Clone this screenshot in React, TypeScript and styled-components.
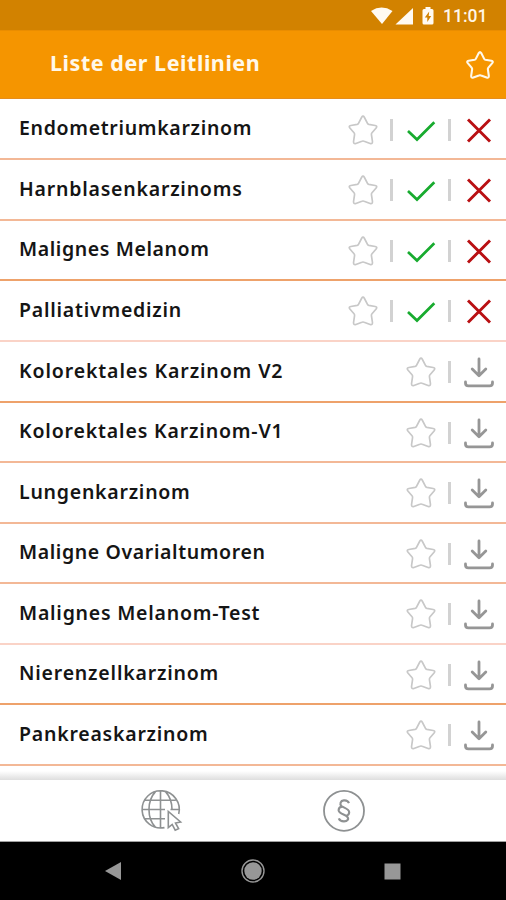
import React from "react";
import styled, { createGlobalStyle } from "styled-components";

const GlobalStyle = createGlobalStyle`
  *, *::before, *::after { box-sizing: border-box; }
  body { margin: 0; background: #fff; overflow: hidden; }
  svg { display: block; overflow: visible; flex: none; }
`;

const Screen = styled.div`
  display: flex;
  flex-direction: column;
  width: 506px;
  height: 900px;
  overflow: hidden;
  font-family: "Noto Sans", sans-serif;
  background: #fff;
`;

const StatusBar = styled.div`
  display: flex;
  flex: none;
  align-items: center;
  justify-content: flex-end;
  height: 30px;
  padding: 1px 19px 0 0;
  background: #d28200;
`;

const Clock = styled.span`
  width: 44px;
  margin-left: 8px;
  color: #fff6e6;
  font: 500 17.5px/30px Roboto, sans-serif;
  letter-spacing: 0;
  white-space: nowrap;
`;

const Header = styled.header`
  display: flex;
  flex: none;
  align-items: center;
  justify-content: space-between;
  height: 69px;
  padding: 0 12px 0 50px;
  background: #f59500;
  border-top: 1px solid #ea8d00;
  border-bottom: 1px solid #e58d1c;
`;

const Title = styled.h1`
  margin: 0 0 3px;
  color: #fff8ea;
  font-size: 21.5px;
  font-weight: 700;
  line-height: 30px;
  letter-spacing: 0.55px;
  white-space: nowrap;
`;

const List = styled.main`
  position: relative;
  flex: none;
  height: 681px;
  overflow: hidden;

  &::after {
    content: "";
    position: absolute;
    inset: auto 0 0;
    height: 9px;
    background: linear-gradient(rgba(90, 90, 90, 0), rgba(90, 90, 90, 0.2));
  }
`;

const lineColors = { strong: "#eea26b", mid: "#f3b896", soft: "#fad3c7" };
type Tone = keyof typeof lineColors;

const Row = styled.div<{ $tone: Tone; $height: number }>`
  display: flex;
  align-items: center;
  justify-content: space-between;
  height: ${(p) => p.$height}px;
  padding: 0 12px 0 19px;
  border-bottom: 2px solid ${(p) => lineColors[p.$tone]};

  &:first-child {
    padding-top: 1px;
  }
`;

const Name = styled.span<{ $spacing: number }>`
  margin-bottom: 2px;
  color: #151515;
  font-size: 19.5px;
  font-weight: 600;
  line-height: 28px;
  letter-spacing: ${(p) => p.$spacing}px;
  white-space: nowrap;
`;

const Actions = styled.div`
  display: flex;
  align-items: center;
  padding-top: 1px;
`;

const Divider = styled.i`
  width: 3px;
  height: 22px;
  margin: 0 13px 0 12px;
  background: #d2d2d2;
`;

const Footer = styled.footer`
  display: flex;
  flex: none;
  justify-content: space-between;
  height: 62px;
  padding: 10px 141px 0 140px;
  background: #fff;
  border-bottom: 1px solid #a0a0a0;
`;

const SystemNav = styled.nav`
  display: flex;
  flex: none;
  align-items: center;
  justify-content: space-between;
  height: 58px;
  padding: 0 105px 0 105px;
  background: #000;
`;

function StarIcon({ color, size, stroke }: { color: string; size: number; stroke: number }) {
  return (
    <svg width={size} height={size} viewBox="0 0 32 32" fill="none" stroke={color} strokeWidth={stroke} strokeLinejoin="round">
      <path d="M14.6 2.4Q16 .1 17.4 2.4L20.8 9Q21.2 9.8 22.2 10L29 11.2Q31.7 11.8 30 13.8L25.6 19Q24.8 20 25 21L26.1 28.4Q26.2 31.2 23.6 30.4L17.2 28Q16 27.5 14.8 28L8.4 30.4Q5.8 31.2 5.9 28.4L7 21Q7.2 20 6.4 19L2 13.8Q.3 11.8 3 11.2L9.8 10Q10.8 9.8 11.2 9Z" />
    </svg>
  );
}

function CheckIcon() {
  return (
    <svg width="30" height="30" viewBox="0 0 30 30" fill="none" stroke="#18ab2f" strokeWidth="2.7">
      <path d="M2 16 11 24.5 28.3 7.3" />
    </svg>
  );
}

function CrossIcon() {
  return (
    <svg width="30" height="30" viewBox="0 0 30 30" fill="none" stroke="#b90f12" strokeWidth="2.9">
      <path d="M4 4.5 26 26.5M26 4.5 4 26.5" />
    </svg>
  );
}

function DownloadIcon() {
  return (
    <svg width="30" height="30" viewBox="0 0 30 30" fill="none" stroke="#969696" strokeWidth="2.8" strokeLinecap="round" strokeLinejoin="round">
      <path d="M15 2V18.5M8.2 12 15 18.8 21.8 12M1.5 25V26Q1.5 28.9 4.5 28.9H25.5Q28.5 28.9 28.5 26V25" />
    </svg>
  );
}

function GlobeIcon() {
  return (
    <svg width="43" height="42" viewBox="0 0 43 42" fill="none" stroke="#8e9192" strokeWidth="1.6">
      <path d="M24.5 37.6A18.6 18.6 0 1 1 38.7 24M20.5 .8V37.8M2 19.5H25M30.5 19.5H39M5.2 10.3H35.8M5 28.8H25M15.5 1.6C6.8 11 6.8 28 15.5 37.4M25.5 1.6C30 6.5 32 12.5 32 19.5" />
      <path d="M28.3 21.5V37.6L32.2 34.4 35.2 40.2 38.6 38.6 35.5 33 40.6 32Z" />
    </svg>
  );
}

function ParagraphIcon() {
  return (
    <svg width="42" height="42" viewBox="0 0 42 42" fill="none" stroke="#8e9192">
      <circle cx="21" cy="20.8" r="20" strokeWidth="1.8" />
      <path
        d="M26 13.2C25 10.7 22.8 10.2 20.8 10.4C17.4 10.7 16.5 14 18.4 16C19.8 17.4 26.2 18.8 26.2 22.3C26.2 24.3 24.8 25.6 22.8 26M19 16.6C16.8 17 15.6 18.4 15.6 20.2C15.6 23.5 22 24.4 24 26.4C26.6 29 24.3 31.4 21 31.4C18.3 31.4 16.6 30.6 15.8 28.3"
        strokeWidth="2.1"
      />
    </svg>
  );
}

function StatusIcons() {
  return (
    <svg width="64" height="20" viewBox="0 0 64 20" fill="#fffaf2">
      <path d="M0 5Q10.5-1.8 21.5 5L11 18Z" />
      <path d="M42 2V18.5H24.5Z" />
      <path fillRule="evenodd" d="M54.5 1H59.5V3H61Q62.5 3 62.5 4.5V17Q62.5 18.6 61 18.6H53Q51.5 18.6 51.5 17V4.5Q51.5 3 53 3H54.5ZM58.2 5.5 53.8 11.5H56.3V16L60.2 10H57.7Z" />
    </svg>
  );
}

interface Guideline {
  name: string;
  installed?: boolean;
  tone: Tone;
  height: number;
  spacing: number;
}

const guidelines: Guideline[] = [
  { name: "Endometriumkarzinom", installed: true, tone: "mid", height: 61, spacing: 0.68 },
  { name: "Harnblasenkarzinoms", installed: true, tone: "mid", height: 61, spacing: 0.78 },
  { name: "Malignes Melanom", installed: true, tone: "strong", height: 60, spacing: 0.6 },
  { name: "Palliativmedizin", installed: true, tone: "soft", height: 61, spacing: 0.77 },
  { name: "Kolorektales Karzinom V2", tone: "strong", height: 61, spacing: 0.88 },
  { name: "Kolorektales Karzinom-V1", tone: "mid", height: 60, spacing: 0.84 },
  { name: "Lungenkarzinom", tone: "mid", height: 61, spacing: 0.75 },
  { name: "Maligne Ovarialtumoren", tone: "mid", height: 60, spacing: 0.61 },
  { name: "Malignes Melanom-Test", tone: "soft", height: 61, spacing: 0.77 },
  { name: "Nierenzellkarzinom", tone: "strong", height: 60, spacing: 0.8 },
  { name: "Pankreaskarzinom", tone: "mid", height: 61, spacing: 0.77 },
];

export default function App() {
  return (
    <>
      <GlobalStyle />
      <Screen>
        <StatusBar>
          <StatusIcons />
          <Clock>11:01</Clock>
        </StatusBar>
        <Header>
          <Title>Liste der Leitlinien</Title>
          <StarIcon color="#fff8ea" size={28} stroke={2.4} />
        </Header>
        <List>
          {guidelines.map((item) => (
            <Row key={item.name} $tone={item.tone} $height={item.height}>
              <Name $spacing={item.spacing}>{item.name}</Name>
              <Actions>
                <StarIcon color="#c8c8c8" size={30} stroke={1.8} />
                <Divider />
                {item.installed && (
                  <>
                    <CheckIcon />
                    <Divider />
                  </>
                )}
                {item.installed ? <CrossIcon /> : <DownloadIcon />}
              </Actions>
            </Row>
          ))}
          <Row $tone="mid" $height={60}>
            <span />
            <Actions>
              <StarIcon color="#c8c8c8" size={30} stroke={1.8} />
              <Divider />
              <DownloadIcon />
            </Actions>
          </Row>
        </List>
        <Footer>
          <GlobeIcon />
          <ParagraphIcon />
        </Footer>
        <SystemNav>
          <svg width="17" height="18" viewBox="0 0 17 18" fill="#979797"><path d="M0 9 16 0V18Z" /></svg>
          <svg width="24" height="24" viewBox="0 0 24 24" fill="#979797">
            <circle cx="12" cy="12" r="8.7" />
            <circle cx="12" cy="12" r="11" fill="none" stroke="#979797" strokeWidth="1.4" />
          </svg>
          <svg width="17" height="17" viewBox="0 0 17 17" fill="#979797"><rect x=".5" y=".5" width="16" height="16" /></svg>
        </SystemNav>
      </Screen>
    </>
  );
}
